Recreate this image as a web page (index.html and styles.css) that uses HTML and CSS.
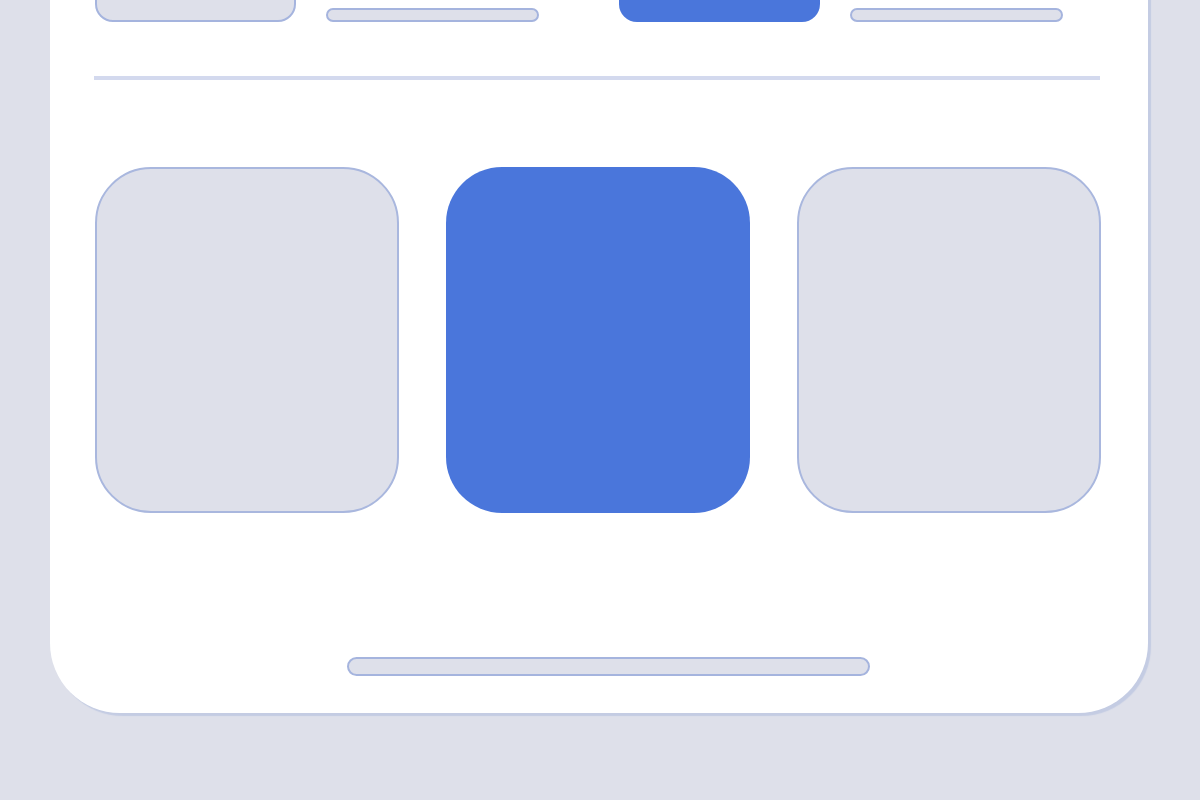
FILE: index.html
```html
<!DOCTYPE html>
<html>
<head>
<meta charset="utf-8">
<link rel="stylesheet" href="styles.css">
</head>
<body>
<div class="page">
  <div class="card">
    <div class="top-row">
      <div class="group">
        <div class="thumb thumb-grey"></div>
        <div class="pill"></div>
      </div>
      <div class="group">
        <div class="thumb thumb-blue"></div>
        <div class="pill"></div>
      </div>
    </div>
    <div class="divider"></div>
    <div class="tiles">
      <div class="tile tile-grey"></div>
      <div class="tile tile-blue"></div>
      <div class="tile tile-grey"></div>
    </div>
    <div class="home-bar"></div>
  </div>
</div>
</body>
</html>
```
FILE: styles.css
```css
html, body {
  margin: 0;
  padding: 0;
  background: #dee0ea;
  font-family: "Liberation Sans", Arial, sans-serif;
}
.page {
  width: 1200px;
  height: 800px;
  overflow: hidden;
  padding-left: 50px;
  box-sizing: border-box;
}
.card {
  width: 1098px;
  margin-top: -80px;
  padding: 40px 48px 37px 45px;
  box-sizing: border-box;
  background: #ffffff;
  border-radius: 0 0 70px 70px;
  box-shadow: 3px 3px 1px #c4cce3;
}
.top-row {
  display: flex;
  align-items: flex-end;
  height: 62px;
}
.group {
  display: flex;
  align-items: flex-end;
  gap: 30px;
  width: 524px;
  flex-shrink: 0;
}
.thumb {
  width: 201px;
  height: 62px;
  box-sizing: border-box;
  border-radius: 18px;
  flex-shrink: 0;
}
.thumb-grey {
  background: #dee0ea;
  border: 2px solid #a5b4de;
}
.thumb-blue {
  background: #4a76db;
}
.pill {
  width: 213px;
  height: 14px;
  box-sizing: border-box;
  background: #dee0ea;
  border: 2px solid #a5b4de;
  border-radius: 7px;
  flex-shrink: 0;
}
.divider {
  margin-top: 54px;
  width: 1006px;
  margin-left: -1px;
  height: 4px;
  background: #d3d9ee;
}
.tiles {
  display: flex;
  gap: 47px;
  margin-top: 87px;
}
.tile {
  width: 304px;
  height: 346px;
  box-sizing: border-box;
  border-radius: 56px;
  flex-shrink: 0;
}
.tile-grey {
  background: #dee0ea;
  border: 2px solid #a9b7de;
}
.tile-blue {
  background: #4a76db;
}
.home-bar {
  margin-top: 144px;
  margin-left: 252px;
  width: 523px;
  height: 19px;
  box-sizing: border-box;
  background: #dee0ea;
  border: 2px solid #a5b4de;
  border-radius: 9.5px;
}
```
